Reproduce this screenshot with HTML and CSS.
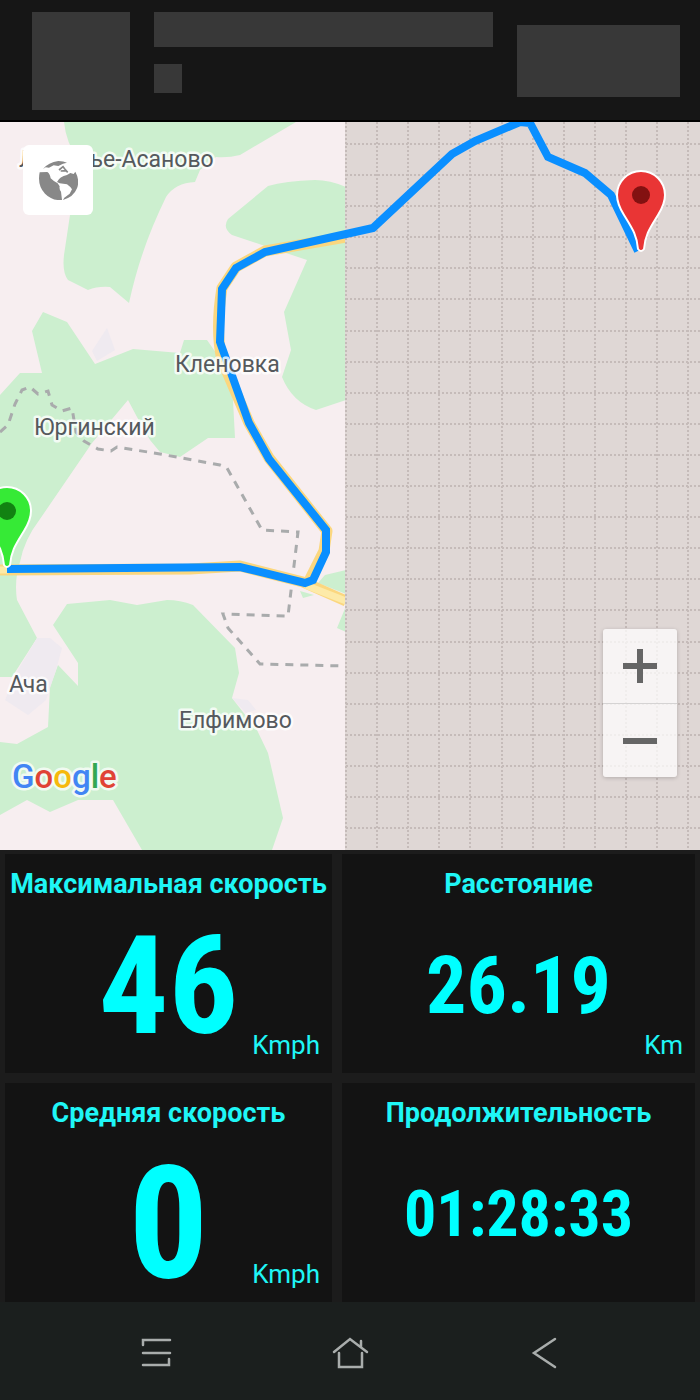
FILE: index.html
```html
<!DOCTYPE html>
<html lang="ru">
<head>
<meta charset="utf-8">
<meta name="viewport" content="width=device-width, initial-scale=1">
<title>GPS</title>
<link rel="stylesheet" href="styles.css">
</head>
<body>
<header class="banner">
  <div class="block block-icon"></div>
  <div class="banner-text">
    <div class="block block-title"></div>
    <div class="block block-badge"></div>
  </div>
  <div class="block block-action"></div>
</header>

<main class="map">
  <svg class="map-canvas" viewBox="0 122 700 728" preserveAspectRatio="xMidYMid slice">
    <rect class="land" x="0" y="122" width="346" height="728"/>
    <g class="forest">
      <path d="M64 122H296L240 155Q228 158 216 157L200 170 195 182Q175 183 166 197C150 230 138 262 129 303L110 287Q98 286 88 290L68 280Q62 272 64 255L70 215 78 160Q66 142 64 122Z"/>
      <path d="M346 187Q330 180 315 180 285 181 268 186L228 219Q222 228 232 235L262 245 307 260 284 312 291 350 282 377Q292 402 316 410L346 400Z"/>
      <path d="M43 312L32 331 42 373H20L0 395V677H12L37 638 17 600Q14 580 20 562 24 540 40 519L92 443 128 400 137 417 150 440 160 452 180 457 208 438H235L233 400 228 370 207 340H184L180 353 133 349 95 364 67 322Z"/>
      <path d="M67 604L53 625 78 663V686L58 665 50 687 48 727 17 744 0 742V815L27 800 50 812 78 800H113L142 850H272L283 818 268 753 257 730 232 698 239 673 235 648 193 605Q180 600 167 600L137 605 110 600Z"/>
      <path d="M325 575L346 570V594L318 583ZM300 591L314 595 303 598ZM337 628L346 606V632Z"/>
    </g>
    <path class="town" d="M37 638H50L62 648 56 670 46 700 28 715 5 700 18 670ZM107 328L115 350 97 361 92 351ZM232 698L248 700 256 710 246 713Z"/>
    <path class="boundary" d="M0 432L8 425 15 404 22 390 30 387 38 394 48 391 52 405 62 411 72 408 76 432 84 441 98 449 111 451 117 447 160 454 220 465 227 468 262 530 298 532 288 616 223 614 228 628 260 664 346 666"/>
    <path class="road" d="M0 570L190 569 240 566 303 582 346 601M308 583L324 551 327 531 269 458 249 423 222 360Q215 330 222 288L236 267 265 251 346 237"/>
    <path class="road-core" d="M0 570H8M305 585L346 601"/>
    <rect class="void" x="345" y="122" width="355" height="728"/>
    <path class="tiles" d="M346 122V850M377 122V850M408 122V850M439 122V850M470 122V850M502 122V850M533 122V850M564 122V850M595 122V850M626 122V850M657 122V850M688 122V850M346 144H700M346 175H700M346 206H700M346 237H700M346 268H700M346 299H700M346 331H700M346 362H700M346 393H700M346 424H700M346 455H700M346 486H700M346 517H700M346 548H700M346 579H700M346 610H700M346 642H700M346 673H700M346 704H700M346 735H700M346 766H700M346 797H700M346 828H700"/>
    <path class="route" d="M7 569L240 567 305 583 313 580 326 552V530L269 459 249 423 220 342 222 289 236 268 265 252 373 228 452 154 475 141 520 122 530 123 548 157 585 173 611 195 638 251"/>
    <g class="places">
      <text x="19" y="167">Лебяжье-Асаново</text>
      <text x="175" y="372">Кленовка</text>
      <text x="34" y="435">Юргинский</text>
      <text x="9" y="692">Ача</text>
      <text x="179" y="728">Елфимово</text>
    </g>
    <text class="brand" x="12" y="788"><tspan class="g-blue">G</tspan><tspan class="g-red">o</tspan><tspan class="g-yellow">o</tspan><tspan class="g-blue">g</tspan><tspan class="g-green">l</tspan><tspan class="g-red">e</tspan></text>
    <defs>
      <path id="pin" d="M-3 54C-4 40 -9 33 -17 20C-22 12 -24 6 -24 0A24 24 0 0 1 24 0C24 6 22 12 17 20C9 33 4 40 3 54Q0 58 -3 54Z"/>
    </defs>
    <g class="pin pin-start" transform="translate(7 511)"><use href="#pin"/><circle r="9"/></g>
    <g class="pin pin-end" transform="translate(641 195)"><use href="#pin"/><circle r="9"/></g>
  </svg>

  <button class="layer-button" type="button" aria-label="Тип карты">
    <svg class="globe" viewBox="0 0 117 117">
      <path d="M2 34L25 33Q33 38 35 52 45 62 56 67L62 76Q60 84 66 92L69 117Q40 120 18 98-6 72 2 34Z"/>
      <path d="M54 63Q62 46 84 42L94 36 104 39 109 32Q123 58 114 82 104 108 72 117L76 110 92 98 99 85 94 78 84 70 62 67Z"/>
      <path d="M12 24Q28 4 58 0 74 0 84 5L72 8 58 15 44 13 30 20 20 19Z"/>
      <path class="coast" d="M60 27L72 17 78 25 86 34M65 30L82 29"/>
    </svg>
  </button>

  <div class="zoom-control">
    <button class="zoom-button" type="button" aria-label="Увеличить">
      <svg viewBox="0 0 34 34"><path d="M0 17H34M17 0V34"/></svg>
    </button>
    <button class="zoom-button" type="button" aria-label="Уменьшить">
      <svg viewBox="0 0 34 34"><path d="M0 17H34"/></svg>
    </button>
  </div>
</main>

<section class="stats">
  <article class="tile">
    <h2 class="tile-title">Максимальная скорость</h2>
    <p class="reading reading-large">46</p>
    <p class="unit">Kmph</p>
  </article>
  <article class="tile">
    <h2 class="tile-title">Расстояние</h2>
    <p class="reading reading-medium">26.19</p>
    <p class="unit">Km</p>
  </article>
  <article class="tile">
    <h2 class="tile-title">Средняя скорость</h2>
    <p class="reading reading-huge">0</p>
    <p class="unit">Kmph</p>
  </article>
  <article class="tile">
    <h2 class="tile-title">Продолжительность</h2>
    <p class="reading reading-small">01:28:33</p>
  </article>
</section>

<nav class="system-bar">
  <button class="system-button" type="button" aria-label="Меню">
    <svg viewBox="0 0 48 48"><path d="M10 15V10H37M10 23H37M10 35H36V29"/></svg>
  </button>
  <button class="system-button" type="button" aria-label="Домой">
    <svg viewBox="0 0 48 48"><path d="M8 22L24 9 41 22M35 11V17M13 23V37H36V23"/></svg>
  </button>
  <button class="system-button" type="button" aria-label="Назад">
    <svg viewBox="0 0 48 48"><path d="M36 9L15 23 36 37"/></svg>
  </button>
</nav>
</body>
</html>
```
FILE: styles.css
```css
* {
  box-sizing: border-box;
}

body {
  display: flex;
  flex-direction: column;
  min-height: 100vh;
  margin: 0;
  background: #1b1b1b;
  font-family: Roboto, "Noto Sans", sans-serif;
}

button {
  padding: 0;
  border: 0;
  background: none;
}

/* Banner */
.banner {
  display: flex;
  align-items: center;
  gap: 24px;
  height: 122px;
  padding: 2px 20px 0 32px;
  border-bottom: 2px solid #000;
  background: #161616;
}

.block {
  background: #383838;
}

.block-icon {
  width: 98px;
  height: 98px;
}

.banner-text {
  flex: 1;
  height: 98px;
}

.block-title {
  height: 35px;
  margin-bottom: 17px;
}

.block-badge {
  width: 28px;
  height: 29px;
}

.block-action {
  width: 163px;
  height: 72px;
}

/* Map */
.map {
  position: relative;
  flex: 1 0 400px;
  overflow: hidden;
  background: #dfd7d5;
}

.map-canvas {
  position: absolute;
  width: 100%;
  height: 100%;
}

.land { fill: #f7eef0; }
.forest { fill: #ccefcf; }
.town { fill: #efeaf0; }
.void { fill: #dfd7d5; }

.boundary {
  fill: none;
  stroke: #a9abac;
  stroke-width: 3;
  stroke-dasharray: 8 7;
}

.road {
  fill: none;
  stroke: #fbd77f;
  stroke-width: 11;
  stroke-linejoin: round;
}

.road-core {
  fill: none;
  stroke: #fdeaa8;
  stroke-width: 7;
}

.tiles {
  fill: none;
  stroke: #c5bbb9;
  stroke-width: 2;
  stroke-dasharray: 2 2;
}

.route {
  fill: none;
  stroke: #0a8fff;
  stroke-width: 8;
}

.places {
  fill: #55595d;
  stroke: #fffc;
  stroke-width: 5;
  stroke-linejoin: round;
  paint-order: stroke;
  font-size: 23px;
}

.brand {
  stroke: #fffb;
  stroke-width: 5;
  stroke-linejoin: round;
  paint-order: stroke;
  font-size: 33px;
  font-weight: 500;
}

.g-blue { fill: #4285f4; }
.g-red { fill: #e04335; }
.g-yellow { fill: #f6b90d; }
.g-green { fill: #34a853; }

.pin use {
  stroke: #fff;
  stroke-width: 2;
}

.pin-start { fill: #36ea36; }
.pin-start circle { fill: #128212; }
.pin-end { fill: #e93535; }
.pin-end circle { fill: #831111; }

.layer-button {
  position: absolute;
  top: 23px;
  left: 23px;
  display: grid;
  place-items: center;
  width: 70px;
  height: 70px;
  border-radius: 6px;
  background: #fff;
}

.globe {
  width: 39px;
  height: 39px;
  fill: #888;
}

.coast {
  fill: none;
  stroke: #888;
  stroke-width: 5;
}

.zoom-control {
  position: absolute;
  right: 23px;
  bottom: 73px;
  display: flex;
  flex-direction: column;
  border-radius: 3px;
  background: #fffb;
  box-shadow: 0 1px 4px #0003;
}

.zoom-button {
  display: grid;
  place-items: center;
  width: 74px;
  height: 74px;
}

.zoom-button + .zoom-button {
  border-top: 1px solid #d5d3d3;
}

.zoom-button svg {
  width: 34px;
  height: 34px;
  stroke: #666;
  stroke-width: 6;
}

/* Readings */
.stats {
  display: grid;
  grid-template-columns: 327fr 353fr;
  grid-auto-rows: 219px;
  gap: 10px;
  padding: 4px 5px 0;
  background: #1c1c1c;
  color: #1ff6f6;
}

.tile {
  display: grid;
  grid-template-rows: 60px 103px 56px;
  grid-template-columns: 100%;
  min-width: 0;
  background: #131313;
}

.tile-title {
  margin: 0;
  font-size: 27px;
  font-weight: 700;
  line-height: 60px;
  text-align: center;
  white-space: nowrap;
}

/* The reading is centred over the space that it shares with the unit */
.reading {
  display: flex;
  grid-area: 2 / 1 / 4 / 2;
  align-items: center;
  justify-content: center;
  height: 144px;
  margin: 0;
  color: #0ff;
  font-family: "Roboto Condensed", Roboto, sans-serif;
  font-weight: 700;
  line-height: 1;
}

.reading-huge {
  height: auto;
  font-size: 158px;
}

.reading-large { font-size: 138px; }
.reading-medium { font-size: 80px; }
.reading-small { font-size: 64px; }

.unit {
  grid-area: 3 / 1;
  margin: 0;
  padding-right: 12px;
  font-size: 26px;
  line-height: 56px;
  text-align: right;
}

/* System bar */
.system-bar {
  display: flex;
  align-items: center;
  justify-content: space-between;
  height: 98px;
  padding: 6px 19% 0;
  background: #1b1f1e;
}

.system-button {
  width: 48px;
  height: 48px;
}

.system-button svg {
  display: block;
  fill: none;
  stroke: #a9adac;
  stroke-width: 2.5;
  stroke-linecap: round;
}
```
